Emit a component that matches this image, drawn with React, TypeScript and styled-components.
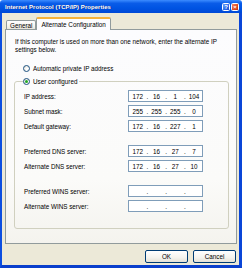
import styled, { createGlobalStyle } from "styled-components";

const GlobalStyle = createGlobalStyle`
  html, body {
    margin: 0;
    padding: 0;
    background: #ffffff;
  }
  body {
    font-family: "Liberation Sans", Arial, sans-serif;
    font-size: 6.3px;
    color: #000000;
  }
`;

const Window = styled.div`
  width: 242px;
  height: 268px;
  display: flex;
  flex-direction: column;
`;

const TitleBar = styled.div`
  height: 13px;
  flex: none;
  display: flex;
  align-items: center;
  padding: 0 3px 0 5px;
  background: linear-gradient(#3c8cff 0%, #0a5ce8 25%, #0054e3 60%, #0049d6 100%);
  border-radius: 3px 3px 0 0;
`;

const TitleText = styled.div`
  color: #ffffff;
  font-weight: bold;
  font-size: 6.1px;
  text-shadow: 1px 0 0 #0a2a8a;
`;

const TitleButtons = styled.div`
  margin-left: auto;
  display: flex;
  gap: 1px;
`;

const CaptionButton = styled.div<{ $close?: boolean }>`
  width: 8px;
  height: 8px;
  box-sizing: border-box;
  border: 1px solid #ffffff;
  border-radius: 1.5px;
  display: flex;
  align-items: center;
  justify-content: center;
  color: #ffffff;
  font-weight: bold;
  font-size: 6px;
  line-height: 1;
  background: ${(p) =>
    p.$close
      ? "linear-gradient(135deg, #f08b6a, #e0461c 60%, #c4300c)"
      : "linear-gradient(135deg, #6aa0ff, #2d6ce8 60%, #1e52d0)"};
`;

const Frame = styled.div`
  flex: 1;
  display: flex;
  flex-direction: column;
  background: #ece9d8;
  border-left: 2px solid #0c4ee0;
  border-right: 3px solid #0a46d8;
  border-bottom: 3px solid #0a3fcc;
  padding: 4px 2px 0 3px;
`;

const TabStrip = styled.div`
  display: flex;
  align-items: flex-end;
  height: 12px;
  margin-left: 1px;
  position: relative;
  z-index: 1;
`;

const Tab = styled.div<{ $active?: boolean }>`
  box-sizing: border-box;
  height: ${(p) => (p.$active ? 13 : 9)}px;
  margin-bottom: ${(p) => (p.$active ? -1 : 0)}px;
  padding: 0 ${(p) => (p.$active ? 4 : 3)}px;
  display: flex;
  align-items: center;
  border: 1px solid #919b9c;
  border-bottom: none;
  border-top: ${(p) => (p.$active ? "2px solid #f7b23a" : "1px solid #919b9c")};
  border-radius: 2px 2px 0 0;
  background: ${(p) =>
    p.$active ? "#fcfcfe" : "linear-gradient(#ffffff, #f3f2ec 70%, #e6e4da)"};
  padding-bottom: ${(p) => (p.$active ? 1 : 0)}px;
`;

const Panel = styled.div`
  height: 215px;
  box-sizing: border-box;
  border: 1px solid #919b9c;
  background: linear-gradient(#fcfcfe 0%, #fbfbf9 70%, #f4f3ee 100%);
  padding: 8px 7px 0 8px;
  display: flex;
  flex-direction: column;
`;

const Intro = styled.div`
  margin-left: 1px;
  line-height: 8px;
  width: 212px;
`;

const RadioRow = styled.label<{ $indent?: number; $top?: number }>`
  display: flex;
  align-items: center;
  gap: 3px;
  height: 9px;
  margin-left: ${(p) => p.$indent ?? 0}px;
  margin-top: ${(p) => p.$top ?? 0}px;
`;

const RadioCircle = styled.span<{ $checked?: boolean }>`
  width: 7px;
  height: 7px;
  box-sizing: border-box;
  border-radius: 50%;
  border: 1px solid #1c5180;
  background: radial-gradient(circle at 65% 65%, #ffffff 20%, #dcd9d0 100%);
  display: flex;
  align-items: center;
  justify-content: center;
  &::after {
    content: "";
    display: ${(p) => (p.$checked ? "block" : "none")};
    width: 3px;
    height: 3px;
    border-radius: 50%;
    background: #25a925;
  }
`;

const GroupBox = styled.fieldset`
  width: 215px;
  box-sizing: border-box;
  margin: 4px 0 0 0;
  padding: 4px 24px 16px 9px;
  border: 1px solid #d0d0bf;
  border-radius: 3px;
`;

const Legend = styled.legend`
  padding: 0 2px 0 0;
  margin-left: -1px;
`;

const Fields = styled.div`
  display: flex;
  flex-direction: column;
  gap: 13px;
`;

const FieldGroup = styled.div`
  display: flex;
  flex-direction: column;
  gap: 3px;
`;

const FieldRow = styled.div`
  display: grid;
  grid-template-columns: 104px 75px;
  align-items: center;
  height: 12px;
`;

const IpBox = styled.div`
  height: 12px;
  box-sizing: border-box;
  border: 1px solid #7f9db9;
  background: #ffffff;
  display: flex;
  align-items: center;
  padding: 0 0 0 1px;
`;

const Octet = styled.span`
  flex: 1;
  text-align: center;
`;

const Dot = styled.span`
  width: 3px;
  text-align: center;
`;

const ButtonRow = styled.div`
  display: flex;
  justify-content: flex-end;
  gap: 5px;
  margin-top: 6px;
  padding-right: 1px;
`;

const Button = styled.button`
  width: 43px;
  height: 13px;
  box-sizing: border-box;
  border: 1px solid #003c74;
  border-radius: 2px;
  background: linear-gradient(#ffffff 0%, #f4f3ee 60%, #e3e0d6 100%);
  font-family: inherit;
  font-size: 6.3px;
  color: #000000;
  padding: 0;
`;

type Field = { label: string; value?: string[] };

const groups: Field[][] = [
  [
    { label: "IP address:", value: ["172", "16", "1", "104"] },
    { label: "Subnet mask:", value: ["255", "255", "255", "0"] },
    { label: "Default gateway:", value: ["172", "16", "227", "1"] },
  ],
  [
    { label: "Preferred DNS server:", value: ["172", "16", "27", "7"] },
    { label: "Alternate DNS server:", value: ["172", "16", "27", "10"] },
  ],
  [{ label: "Preferred WINS server:" }, { label: "Alternate WINS server:" }],
];

const IpField = ({ value }: { value?: string[] }) => {
  const parts = value ?? ["", "", "", ""];
  return (
    <IpBox>
      <Octet>{parts[0]}</Octet>
      <Dot>.</Dot>
      <Octet>{parts[1]}</Octet>
      <Dot>.</Dot>
      <Octet>{parts[2]}</Octet>
      <Dot>.</Dot>
      <Octet>{parts[3]}</Octet>
    </IpBox>
  );
};

export default function App() {
  return (
    <>
      <GlobalStyle />
      <Window>
        <TitleBar>
          <TitleText>Internet Protocol (TCP/IP) Properties</TitleText>
          <TitleButtons>
            <CaptionButton>?</CaptionButton>
            <CaptionButton $close>×</CaptionButton>
          </TitleButtons>
        </TitleBar>
        <Frame>
          <TabStrip>
            <Tab>General</Tab>
            <Tab $active>Alternate Configuration</Tab>
          </TabStrip>
          <Panel>
            <Intro>
              If this computer is used on more than one network, enter the alternate IP
              settings below.
            </Intro>
            <RadioRow $indent={9} $top={10}>
              <RadioCircle />
              Automatic private IP address
            </RadioRow>
            <GroupBox>
              <Legend>
                <RadioRow>
                  <RadioCircle $checked />
                  User configured
                </RadioRow>
              </Legend>
              <Fields>
                {groups.map((group, i) => (
                  <FieldGroup key={i}>
                    {group.map((f) => (
                      <FieldRow key={f.label}>
                        <span>{f.label}</span>
                        <IpField value={f.value} />
                      </FieldRow>
                    ))}
                  </FieldGroup>
                ))}
              </Fields>
            </GroupBox>
          </Panel>
          <ButtonRow>
            <Button>OK</Button>
            <Button>Cancel</Button>
          </ButtonRow>
        </Frame>
      </Window>
    </>
  );
}
